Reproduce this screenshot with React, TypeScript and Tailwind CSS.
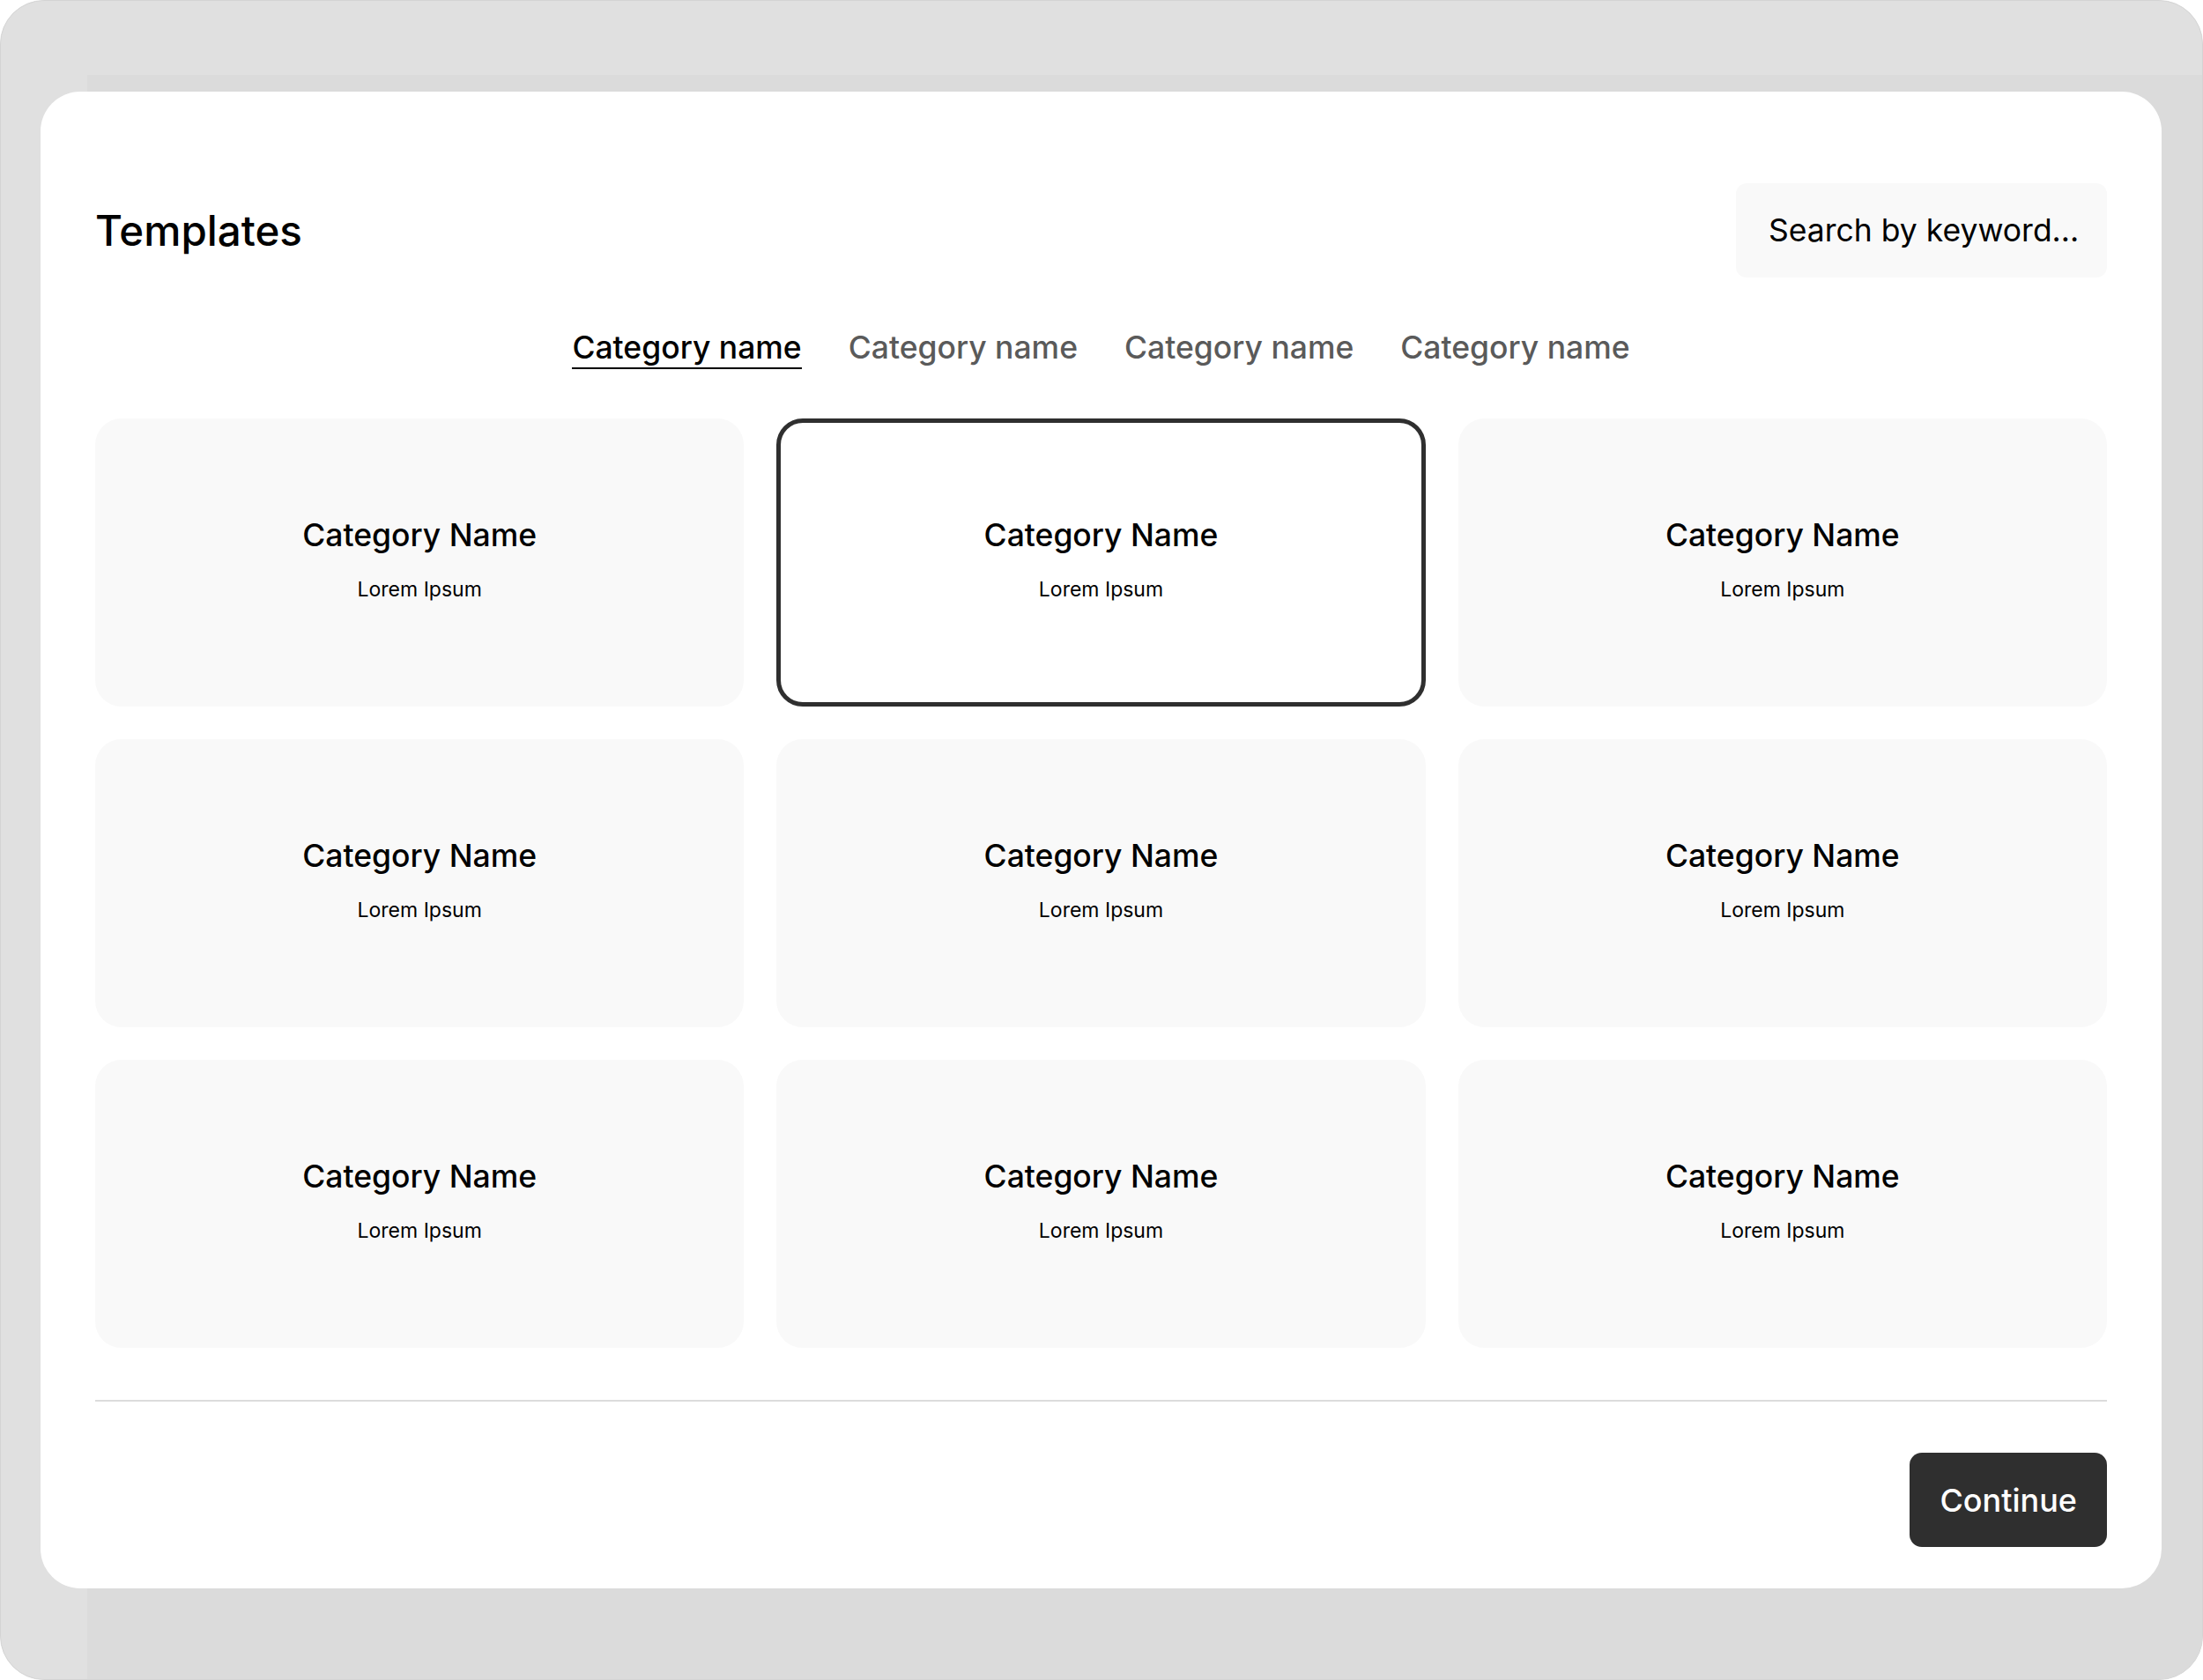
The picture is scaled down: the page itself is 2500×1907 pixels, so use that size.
import React from "react";

const tabs = ["Category name", "Category name", "Category name", "Category name"];

function Card({ selected }: { selected?: boolean }) {
  return (
    <div
      className={
        selected
          ? "flex h-[327px] flex-col items-center justify-center rounded-[30px] border-[5px] border-[#2f2f2f] bg-white pb-[7px]"
          : "flex h-[327px] flex-col items-center justify-center rounded-[30px] bg-[#f9f9f9] pb-[7px]"
      }
    >
      <div className="text-[35.5px] font-medium leading-[42px] text-black">Category Name</div>
      <div className="mt-[26px] text-[23px] leading-[28px] text-black">Lorem Ipsum</div>
    </div>
  );
}

export default function App() {
  return (
    <div className="bg-white" style={{ fontFamily: "Inter, 'Noto Sans', sans-serif" }}>
      <div className="relative h-[1907px] w-[2500px] overflow-hidden rounded-[50px] border border-[#d4d4d4] bg-[#e0e0e0]">
        <div className="absolute left-[98px] top-[84px] right-0 bottom-0 bg-[#dbdbdb]" />
        <div className="relative ml-[45px] mt-[103px] flex h-[1699px] w-[2407px] flex-col rounded-[45px] bg-white px-[62px] pt-[104px]">
          <div className="flex h-[107px] items-center justify-between">
            <h1 className="text-[47.5px] font-medium leading-none text-black">Templates</h1>
            <div className="flex h-[107px] w-[421px] items-center rounded-[12px] bg-[#f9f9f9] pl-[37px] text-[35.5px] text-black">
              Search by keyword...
            </div>
          </div>

          <div className="mt-[58px] flex justify-center gap-[53px]">
            {tabs.map((t, i) => (
              <span
                key={i}
                className={
                  i === 0
                    ? "border-b-2 border-black text-[35.5px] font-medium leading-[44px] text-black"
                    : "border-b-2 border-transparent text-[35.5px] font-medium leading-[44px] text-[#5a5a5a]"
                }
              >
                {t}
              </span>
            ))}
          </div>

          <div className="mt-[56px] grid grid-cols-3 gap-[37px]">
            {Array.from({ length: 9 }).map((_, i) => (
              <Card key={i} selected={i === 1} />
            ))}
          </div>

          <div className="mt-[59px] h-[2px] bg-[#dcdcdc]" />

          <div className="mt-[58px] flex justify-end">
            <button className="flex h-[107px] items-center rounded-[14px] bg-[#2f2f2f] px-[34px] text-[36px] font-medium text-white">
              Continue
            </button>
          </div>
        </div>
      </div>
    </div>
  );
}
